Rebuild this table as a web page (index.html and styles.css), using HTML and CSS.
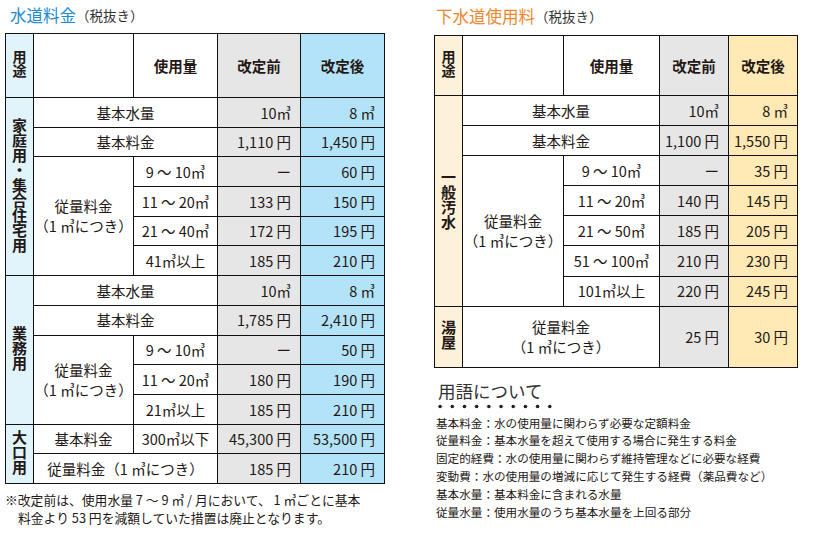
FILE: index.html
```html
<!DOCTYPE html>
<html lang="ja">
<head>
<meta charset="utf-8">
<title>料金</title>
<link rel="stylesheet" href="styles.css">
</head>
<body>
<div class="page">
  <section class="panel panel-left">
    <h2 class="title"><span class="title-main blue">水道料金</span><span class="title-sub">（税抜き）</span></h2>
    <table class="rate rate-water">
      <colgroup><col class="w28"><col class="w100"><col class="w84"><col class="w83"><col class="w84"></colgroup>
      <thead>
        <tr class="head-water">
          <th class="use"><span class="vt vt-sm">用途</span></th>
          <th></th>
          <th>使用量</th>
          <th class="before">改定前</th>
          <th class="after-blue">改定後</th>
        </tr>
      </thead>
      <tbody class="body-water">
        <tr>
          <th rowspan="6" class="use"><span class="vt">家庭用・集合住宅用</span></th>
          <td colspan="2">基本水量</td>
          <td class="num before">10㎥</td>
          <td class="num after-blue">8 ㎥</td>
        </tr>
        <tr>
          <td colspan="2">基本料金</td>
          <td class="num before">1,110 円</td>
          <td class="num after-blue">1,450 円</td>
        </tr>
        <tr>
          <td rowspan="4"><span class="ln">従量料金</span><span class="ln">（1 ㎥につき）</span></td>
          <td>9 ～ 10㎥</td>
          <td class="num before">ー</td>
          <td class="num after-blue">60 円</td>
        </tr>
        <tr><td>11 ～ 20㎥</td><td class="num before">133 円</td><td class="num after-blue">150 円</td></tr>
        <tr><td>21 ～ 40㎥</td><td class="num before">172 円</td><td class="num after-blue">195 円</td></tr>
        <tr><td>41㎥以上</td><td class="num before">185 円</td><td class="num after-blue">210 円</td></tr>
        <tr>
          <th rowspan="5" class="use"><span class="vt">業務用</span></th>
          <td colspan="2">基本水量</td>
          <td class="num before">10㎥</td>
          <td class="num after-blue">8 ㎥</td>
        </tr>
        <tr>
          <td colspan="2">基本料金</td>
          <td class="num before">1,785 円</td>
          <td class="num after-blue">2,410 円</td>
        </tr>
        <tr>
          <td rowspan="3"><span class="ln">従量料金</span><span class="ln">（1 ㎥につき）</span></td>
          <td>9 ～ 10㎥</td>
          <td class="num before">ー</td>
          <td class="num after-blue">50 円</td>
        </tr>
        <tr><td>11 ～ 20㎥</td><td class="num before">180 円</td><td class="num after-blue">190 円</td></tr>
        <tr><td>21㎥以上</td><td class="num before">185 円</td><td class="num after-blue">210 円</td></tr>
        <tr>
          <th rowspan="2" class="use"><span class="vt">大口用</span></th>
          <td>基本料金</td>
          <td>300㎥以下</td>
          <td class="num before">45,300 円</td>
          <td class="num after-blue">53,500 円</td>
        </tr>
        <tr>
          <td colspan="2">従量料金（1 ㎥につき）</td>
          <td class="num before">185 円</td>
          <td class="num after-blue">210 円</td>
        </tr>
      </tbody>
    </table>
    <p class="note"><span class="ln">※改定前は、使用水量 7 ～ 9 ㎥ / 月において、 1 ㎥ごとに基本</span><span class="ln indent">料金より 53 円を減額していた措置は廃止となります。</span></p>
  </section>

  <section class="panel panel-right">
    <h2 class="title title-right"><span class="title-main orange">下水道使用料</span><span class="title-sub">（税抜き）</span></h2>
    <table class="rate rate-sewer">
      <colgroup><col class="w28"><col class="w101"><col class="w96"><col class="w69"><col class="w69"></colgroup>
      <thead>
        <tr class="head-sewer">
          <th class="use-cream"><span class="vt vt-sm">用途</span></th>
          <th></th>
          <th>使用量</th>
          <th class="before">改定前</th>
          <th class="after-yellow">改定後</th>
        </tr>
      </thead>
      <tbody class="body-sewer">
        <tr>
          <th rowspan="7" class="use-cream"><span class="vt">一般汚水</span></th>
          <td colspan="2">基本水量</td>
          <td class="num before">10㎥</td>
          <td class="num after-yellow">8 ㎥</td>
        </tr>
        <tr>
          <td colspan="2">基本料金</td>
          <td class="num before">1,100 円</td>
          <td class="num after-yellow">1,550 円</td>
        </tr>
        <tr>
          <td rowspan="5"><span class="ln">従量料金</span><span class="ln">（1 ㎥につき）</span></td>
          <td>9 ～ 10㎥</td>
          <td class="num before">ー</td>
          <td class="num after-yellow">35 円</td>
        </tr>
        <tr><td>11 ～ 20㎥</td><td class="num before">140 円</td><td class="num after-yellow">145 円</td></tr>
        <tr><td>21 ～ 50㎥</td><td class="num before">185 円</td><td class="num after-yellow">205 円</td></tr>
        <tr><td>51 ～ 100㎥</td><td class="num before">210 円</td><td class="num after-yellow">230 円</td></tr>
        <tr><td>101㎥以上</td><td class="num before">220 円</td><td class="num after-yellow">245 円</td></tr>
        <tr class="row-tall">
          <th class="use-cream"><span class="vt">湯屋</span></th>
          <td colspan="2"><span class="ln">従量料金</span><span class="ln">（1 ㎥につき）</span></td>
          <td class="num before">25 円</td>
          <td class="num after-yellow">30 円</td>
        </tr>
      </tbody>
    </table>
    <h3 class="terms-title">用語について</h3>
    <div class="dots"></div>
    <ul class="terms">
      <li>基本料金：水の使用量に関わらず必要な定額料金</li>
      <li>従量料金：基本水量を超えて使用する場合に発生する料金</li>
      <li>固定的経費：水の使用量に関わらず維持管理などに必要な経費</li>
      <li>変動費：水の使用量の増減に応じて発生する経費（薬品費など）</li>
      <li>基本水量：基本料金に含まれる水量</li>
      <li>従量水量：使用水量のうち基本水量を上回る部分</li>
    </ul>
  </section>
</div>
</body>
</html>
```

FILE: styles.css
```css
* { box-sizing: border-box; }
body {
  margin: 0;
  background: #fff;
  font-family: "Noto Sans CJK JP", "Noto Sans", sans-serif;
  color: #231815;
}
.page {
  display: flex;
  gap: 49px;
  padding-left: 5px;
  width: 830px;
  height: 533px;
}
.panel-left { width: 380px; }
.panel-right { width: 364px; }

.title {
  margin: 0;
  height: 33px;
  display: flex;
  align-items: center;
  padding-left: 5px;
  padding-bottom: 4px;
  font-weight: normal;
}
.title-right { height: 35px; padding-left: 2px; }
.title-main { font-size: 16.5px; }
.title-sub { font-size: 13.5px; color: #333; }
.blue { color: #1d8ad4; }
.orange { color: #f0862c; }

.rate {
  border-collapse: collapse;
  table-layout: fixed;
  font-size: 14.5px;
}
.rate-water { width: 380px; }
.rate-sewer { width: 364px; }
.w28 { width: 28px; }
.w100 { width: 100px; }
.w101 { width: 101px; }
.w84 { width: 84px; }
.w83 { width: 83px; }
.w96 { width: 96px; }
.w69 { width: 69px; }

.rate th, .rate td {
  border: 1px solid #111;
  padding: 0;
  text-align: center;
  line-height: 1.2;
  font-weight: normal;
}
.rate thead th { font-weight: bold; font-size: 14.5px; }
.head-water { height: 64px; }
.head-sewer { height: 60px; }
.body-water tr { height: 29.7px; }
.body-sewer tr { height: 30.1px; }
.body-sewer tr.row-tall { height: 61px; }

.rate .num { text-align: right; padding-right: 9px; }
.before { background: #e6e6e6; }
.after-blue { background: #b3e3f8; }
.after-yellow { background: #ffe9b4; }
.use { background: #e1f3fb; }
.use-cream { background: #fdf1d9; }
.rate th.use, .rate th.use-cream { font-weight: bold; }
.ln { display: block; line-height: 20px; }

.vt {
  display: inline-block;
  writing-mode: vertical-rl;
  text-orientation: upright;
  font-size: 15px;
  line-height: 1;
  font-weight: bold;
}
.vt-sm { font-size: 14px; }

.note {
  margin: 7px 0 0;
  font-size: 12.8px;
}
.note .ln { line-height: 18px; }
.indent { padding-left: 13px; }

.terms-title {
  margin: 12px 0 0;
  padding-left: 4px;
  font-size: 17.5px;
  font-weight: normal;
  line-height: 22px;
  color: #333;
}
.dots {
  margin: 2px 0 0 0;
  width: 122px;
  height: 5px;
  background: radial-gradient(circle, #222 1.6px, transparent 2.1px) 0 0 / 12.2px 5px repeat-x;
}
.terms {
  list-style: none;
  margin: 6px 0 0;
  padding: 0 0 0 2px;
  font-size: 11.6px;
  line-height: 17.8px;
}
```
